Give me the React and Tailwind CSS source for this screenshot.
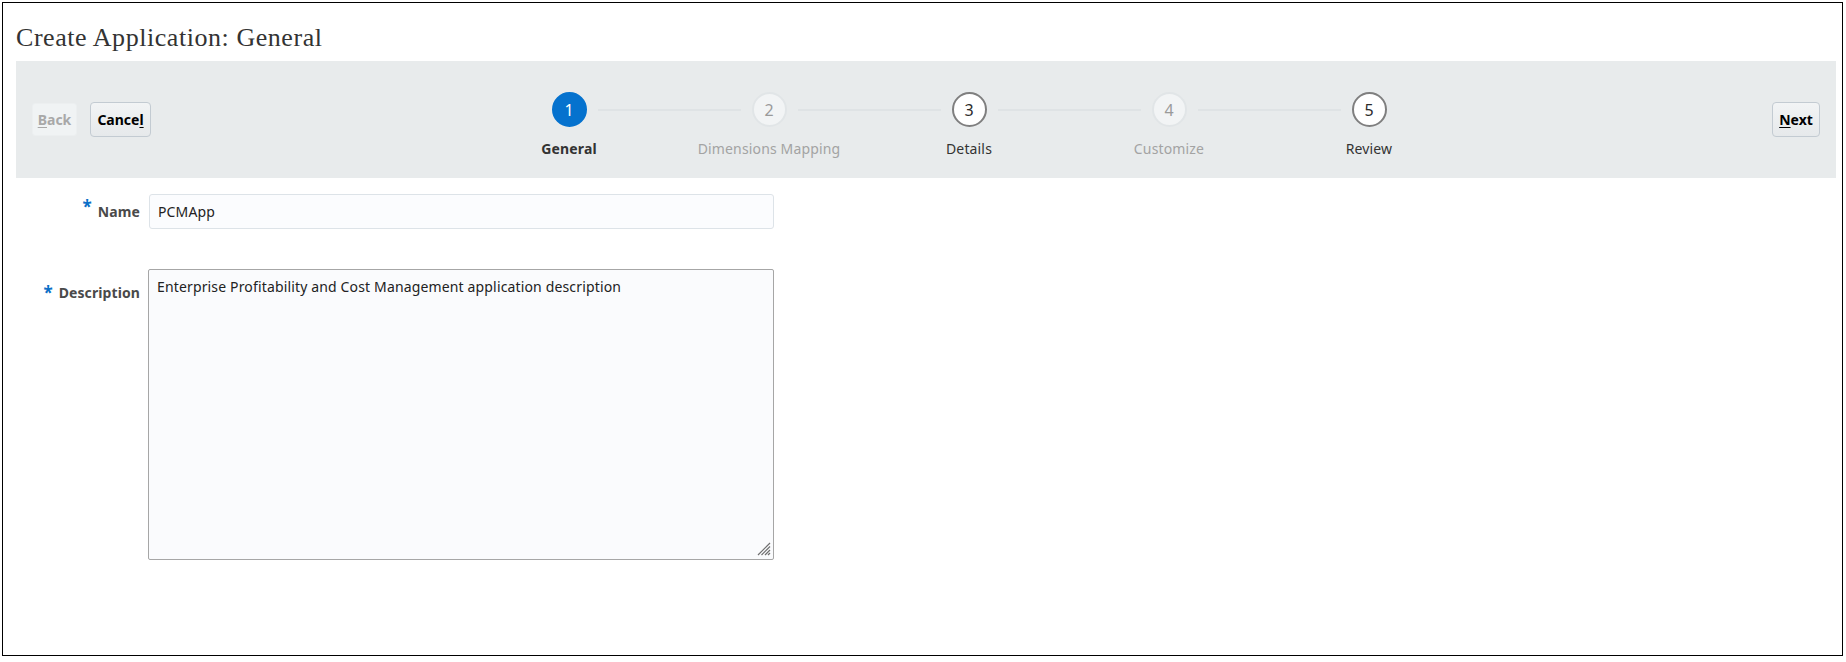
import React from "react";

const steps = [
  { n: 1, label: "General", state: "active" },
  { n: 2, label: "Dimensions Mapping", state: "disabled" },
  { n: 3, label: "Details", state: "enabled" },
  { n: 4, label: "Customize", state: "disabled" },
  { n: 5, label: "Review", state: "enabled" },
];

function Step({ step, first, last }) {
  const circle =
    step.state === "active"
      ? "bg-[#0572ce] text-white border-2 border-[#0572ce]"
      : step.state === "disabled"
      ? "bg-[#f2f4f5] text-[#9a9a9a] border-2 border-[#e1e5e7]"
      : "bg-white text-[#2b2b2b] border-2 border-[#7f7f7f]";
  const label =
    step.state === "active"
      ? "font-bold text-[#333333]"
      : step.state === "disabled"
      ? "text-[#a3a3a3]"
      : "text-[#333333]";
  return (
    <div className="w-[200px] flex flex-col items-center">
      <div className="w-full flex items-center h-[35px]">
        <div className={`flex-1 h-[2px] mr-[11px] ${first ? "" : "bg-[#dfe3e5]"}`} />
        <div
          className={`w-[35px] h-[35px] rounded-full flex items-center justify-center text-[16px] leading-none ${circle}`}
        >
          {step.n}
        </div>
        <div className={`flex-1 h-[2px] ml-[11px] ${last ? "" : "bg-[#dfe3e5]"}`} />
      </div>
      <div className={`mt-[12px] text-[14px] leading-[20px] tracking-[0.15px] ${label}`}>{step.label}</div>
    </div>
  );
}

export default function App() {
  return (
    <div
      className="w-[1846px] h-[662px] bg-white overflow-hidden"
      style={{ fontFamily: '"Noto Sans", "Open Sans", sans-serif' }}
    >
      <div className="ml-[2px] mt-[2px] w-[1841px] h-[654px] border border-black flex flex-col">
        <h1
          className="ml-[13px] mt-[19px] text-[26px] leading-[32px] tracking-[0.55px] text-[#333333]"
          style={{ fontFamily: '"Liberation Serif", "Times New Roman", serif' }}
        >
          Create Application: General
        </h1>
        <div className="ml-[13px] mt-[7px] w-[1820px] h-[117px] bg-[#e8ebec] flex items-center px-[16px]">
          <div className="flex items-center gap-[13px] self-center">
            <button className="w-[45px] h-[33px] rounded-[3px] bg-[#f0f3f4] border border-[#eceff0] text-[14px] font-bold text-[#a8a8a8]">
              <span className="underline underline-offset-2">B</span>ack
            </button>
            <button className="w-[61px] h-[35px] rounded-[4px] bg-gradient-to-b from-[#f2f4f5] to-[#e6e9eb] border border-[#c3cbd2] text-[14px] font-bold text-black">
              Cance<span className="underline underline-offset-2">l</span>
            </button>
          </div>
          <div className="ml-[318px] self-start pt-[31px] flex">
            {steps.map((s, i) => (
              <Step key={s.n} step={s} first={i === 0} last={i === steps.length - 1} />
            ))}
          </div>
          <div className="ml-auto">
            <button className="w-[48px] h-[35px] rounded-[4px] bg-gradient-to-b from-[#f2f4f5] to-[#e6e9eb] border border-[#c3cbd2] text-[14px] font-bold text-black">
              <span className="underline underline-offset-2">N</span>ext
            </button>
          </div>
        </div>

        <div className="mt-[16px] flex items-center">
          <div className="w-[137px] flex justify-end items-start">
            <span className="text-[#0b6fc7] text-[17px] font-bold leading-none mr-[6px] -mt-[4px]">*</span>
            <span className="text-[14px] font-bold text-[#4a4a4a] leading-[20px] tracking-[0.1px]">Name</span>
          </div>
          <div className="ml-[9px] w-[625px] h-[35px] rounded-[3px] border border-[#dde3e8] bg-[#fbfcfe] flex items-center px-[8px] text-[14px] tracking-[0.15px] text-[#222]">
            PCMApp
          </div>
        </div>

        <div className="mt-[40px] flex items-start">
          <div className="w-[137px] flex justify-end items-start pt-[14px]">
            <span className="text-[#0b6fc7] text-[17px] font-bold leading-none mr-[6px] mt-[1px]">*</span>
            <span className="text-[14px] font-bold text-[#4a4a4a] leading-[20px] tracking-[0.1px]">Description</span>
          </div>
          <div className="relative ml-[8px] w-[626px] h-[291px] rounded-[2px] border border-[#a6a6a6] bg-[#fafbfd] px-[8px] pt-[7px] text-[14px] leading-[20px] tracking-[0.15px] text-[#222]">
            Enterprise Profitability and Cost Management application description
            <svg
              className="absolute right-[2px] bottom-[3px]"
              width="14"
              height="14"
              viewBox="0 0 14 14"
            >
              <g stroke="#6f6f6f" strokeWidth="1.2">
                <line x1="1" y1="13" x2="13" y2="1" />
                <line x1="4.5" y1="13" x2="13" y2="4.5" />
                <line x1="8" y1="13" x2="13" y2="8" />
                <line x1="11" y1="13" x2="13" y2="11" />
              </g>
            </svg>
          </div>
        </div>
      </div>
    </div>
  );
}
